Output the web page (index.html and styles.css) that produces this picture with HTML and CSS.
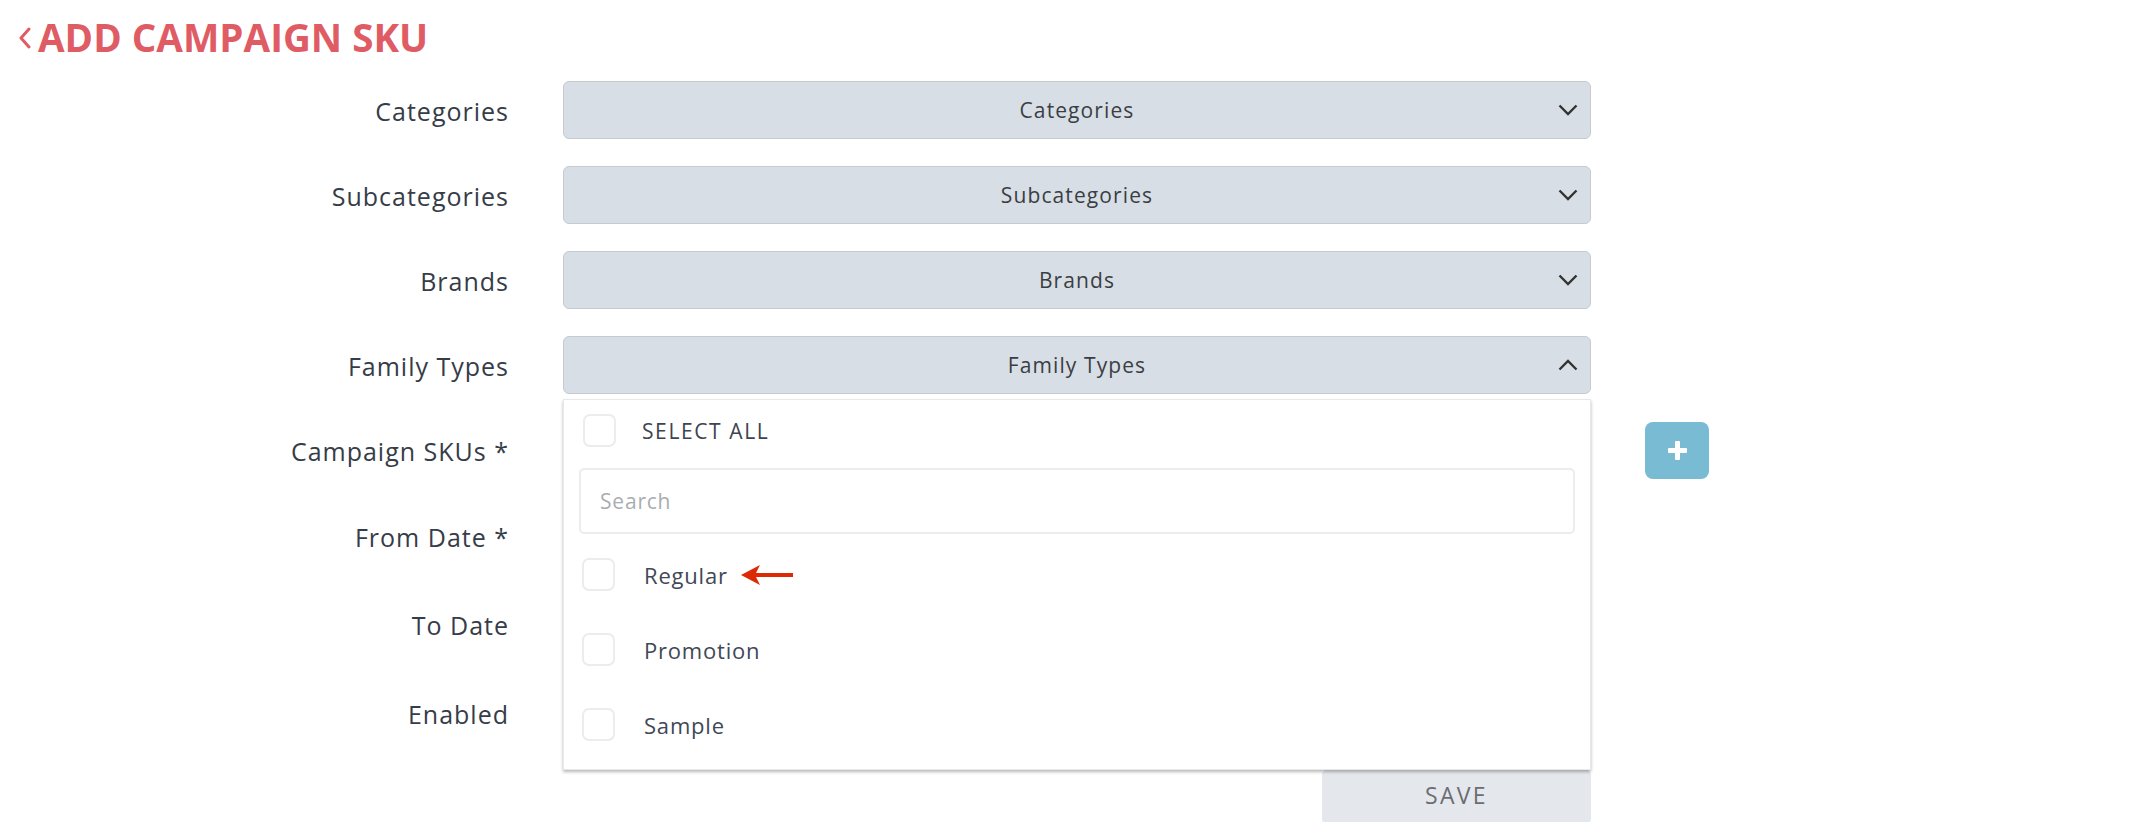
FILE: index.html
```html
<!DOCTYPE html>
<html>
<head>
<meta charset="utf-8">
<link rel="stylesheet" href="styles.css">
</head>
<body>
<header class="page-head">
  <svg class="back" viewBox="0 0 12 22" width="12" height="22"><path d="M10 2 L2 11 L10 20" fill="none" stroke="#e05c64" stroke-width="3" stroke-linecap="round" stroke-linejoin="round"/></svg>
  <h1 class="title">ADD CAMPAIGN SKU</h1>
</header>
<form class="form">
  <label class="lbl">Categories</label>
  <div class="field"><div class="select"><span>Categories</span><svg class="chev" viewBox="0 0 20 12" width="20" height="12"><path d="M1.5 1.5 L10 10 L18.5 1.5" fill="none" stroke="#333" stroke-width="2.4"/></svg></div></div>
  <div></div>

  <label class="lbl">Subcategories</label>
  <div class="field"><div class="select"><span>Subcategories</span><svg class="chev" viewBox="0 0 20 12" width="20" height="12"><path d="M1.5 1.5 L10 10 L18.5 1.5" fill="none" stroke="#333" stroke-width="2.4"/></svg></div></div>
  <div></div>

  <label class="lbl">Brands</label>
  <div class="field"><div class="select"><span>Brands</span><svg class="chev" viewBox="0 0 20 12" width="20" height="12"><path d="M1.5 1.5 L10 10 L18.5 1.5" fill="none" stroke="#333" stroke-width="2.4"/></svg></div></div>
  <div></div>

  <label class="lbl">Family Types</label>
  <div class="field open">
    <div class="select"><span>Family Types</span><svg class="chev" viewBox="0 0 20 12" width="20" height="12"><path d="M1.5 10.5 L10 2 L18.5 10.5" fill="none" stroke="#333" stroke-width="2.4"/></svg></div>
    <div class="menu">
      <div class="sel-all"><span class="box"></span><span class="sel-all-txt">SELECT ALL</span></div>
      <div class="search">Search</div>
      <div class="opt"><span class="box"></span><span class="opt-txt">Regular</span>
        <svg class="arrow" viewBox="0 0 52 24" width="52" height="24"><path d="M0 12 L19 2 L15 10 L52 10 L52 14 L15 14 L19 22 Z" fill="#dc2a06"/></svg>
      </div>
      <div class="opt"><span class="box"></span><span class="opt-txt">Promotion</span></div>
      <div class="opt"><span class="box"></span><span class="opt-txt">Sample</span></div>
    </div>
  </div>
  <div></div>

  <label class="lbl">Campaign SKUs *</label>
  <div class="field"><div class="select"><span>Campaign SKUs</span></div></div>
  <div class="add"><button type="button" class="plus"><svg viewBox="0 0 19 19" width="19" height="19"><rect x="7" y="0" width="5" height="19" rx="1" fill="#fff"/><rect x="0" y="7" width="19" height="5" rx="1" fill="#fff"/></svg></button></div>

  <label class="lbl">From Date *</label>
  <div class="field"><div class="input"></div></div>
  <div></div>

  <label class="lbl">To Date</label>
  <div class="field"><div class="input"></div></div>
  <div></div>

  <label class="lbl">Enabled</label>
  <div class="field"><div class="input"></div></div>
  <div></div>

  <div></div>
  <div class="field actions"><button type="button" class="save">SAVE</button></div>
  <div></div>
</form>
</body>
</html>
```

FILE: styles.css
```css
* { box-sizing: border-box; }
body {
  margin: 0;
  background: #fff;
  font-family: "Open Sans", "Liberation Sans", sans-serif;
  overflow: hidden;
}
.page-head {
  display: flex;
  align-items: center;
  gap: 7px;
  padding: 14px 0 0 19px;
  height: 60px;
}
.back { display: block; margin-top: 2px; }
.title {
  margin: 0;
  font-size: 38.6px;
  font-weight: 700;
  color: #e05c64;
  line-height: 40px;
  letter-spacing: 0;
}
.form {
  display: grid;
  grid-template-columns: 509px 1028px 64px;
  grid-template-rows: 58px 58px 58px 58px 58px 60px 62px 62px 56px;
  column-gap: 54px;
  row-gap: 27px;
  margin-top: 21px;
}
.form > :nth-last-child(-n+3) { margin-top: -2px; }
.lbl {
  display: flex;
  align-items: center;
  justify-content: flex-end;
  font-size: 25px;
  letter-spacing: 1px;
  color: #363c48;
  padding-top: 1px;
}
.field { position: relative; }
.select {
  height: 100%;
  background: #d8dee5;
  border: 1px solid #c6cbd1;
  border-radius: 6px;
  display: flex;
  align-items: center;
  justify-content: center;
  font-size: 21px;
  letter-spacing: 1.1px;
  color: #3a3e44;
  position: relative;
}
.chev { position: absolute; right: 12px; top: 50%; margin-top: -6px; }
.input {
  height: 100%;
  border: 1px solid #ddd;
  border-radius: 6px;
}
.menu {
  position: absolute;
  top: calc(100% + 5px);
  left: 0;
  right: 0;
  height: 371px;
  background: #fff;
  border: 1px solid #e8e8e8;
  box-shadow: 0 2px 3px rgba(0,0,0,0.28);
  z-index: 5;
  padding: 14px 15px 0 15px;
  display: flex;
  flex-direction: column;
}
.box {
  width: 33px;
  height: 33px;
  border: 2px solid #ececec;
  border-radius: 7px;
  flex: none;
}
.sel-all {
  display: flex;
  align-items: center;
  height: 33px;
  padding-left: 4px;
}
.sel-all-txt {
  margin-left: 26px;
  font-size: 21px;
  letter-spacing: 1.6px;
  color: #3d4350;
}
.search {
  margin-top: 21px;
  height: 66px;
  border: 2px solid #ececec;
  border-radius: 5px;
  display: flex;
  align-items: center;
  padding-left: 19px;
  font-size: 21px;
  letter-spacing: 0.8px;
  color: #a9adb2;
}
.opt {
  display: flex;
  align-items: center;
  height: 75px;
  padding-left: 3px;
}
.search + .opt { margin-top: 3px; }
.opt-txt {
  margin-left: 29px;
  font-size: 22px;
  letter-spacing: 0.8px;
  color: #414856;
}
.arrow { margin-left: 13px; display: block; }
.add { display: flex; align-items: center; }
.plus {
  width: 64px;
  height: 57px;
  border: 0;
  border-radius: 8px;
  background: #79bbd3;
  display: flex;
  align-items: center;
  justify-content: center;
  padding: 0;
}
.plus svg { display: block; }
.actions { display: flex; justify-content: flex-end; }
.save {
  width: 269px;
  height: 56px;
  border: 0;
  border-radius: 6px;
  background: #e4e8ec;
  color: #6a6d72;
  font-family: "Open Sans", "Liberation Sans", sans-serif;
  font-size: 23px;
  letter-spacing: 2.3px;
  padding: 0 0 4px 0;
}
```
